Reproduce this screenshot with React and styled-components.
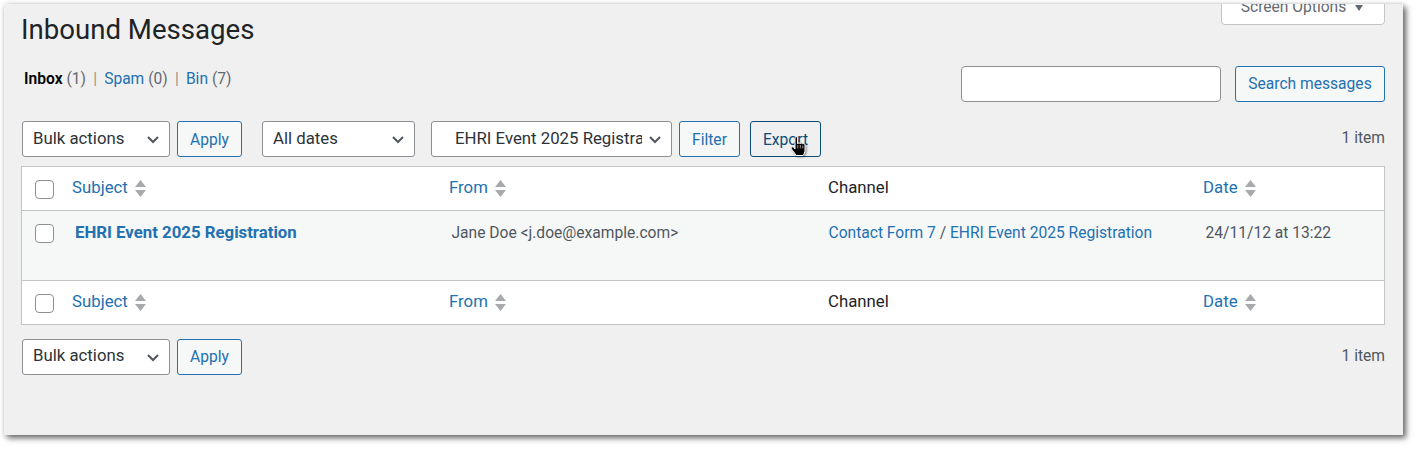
import React from "react";
import styled, { createGlobalStyle } from "styled-components";

const Global = createGlobalStyle`
  html, body { margin: 0; padding: 0; background: #fff; }
  body { font-family: Roboto, "Liberation Sans", sans-serif; color: #3c434a; }
  * { box-sizing: border-box; }
`;

const Page = styled.div`
  width: 1418px;
  height: 450px;
  padding: 4px 15px 15px 4px;
  background: #fff;
`;
const Panel = styled.main`
  height: 431px;
  background: #f0f0f1;
  padding: 0 18px 0 17px;
  overflow: hidden;
  box-shadow: 3px 3px 6px rgba(0, 0, 0, 0.6), 0 0 5px rgba(0, 0, 0, 0.1);
  font-size: 15.6px;
`;
const Head = styled.header`
  display: flex;
  justify-content: space-between;
  align-items: flex-start;
  height: 62px;
`;
const Title = styled.h1`
  margin: 9px 0 0;
  font-size: 27.6px;
  line-height: 34px;
  font-weight: 400;
  color: #1d2327;
`;
const ScreenOptions = styled.button`
  width: 164px;
  height: 34px;
  margin-top: -13px;
  border: 1px solid #c3c4c7;
  border-radius: 0 0 4px 4px;
  background: #fff;
  color: #646970;
  font: 400 15.6px/30px Roboto, sans-serif;
  padding: 0 2px 2px 0;
  display: flex;
  align-items: center;
  justify-content: center;
  gap: 9px;
`;
const Caret = styled.span`
  width: 0;
  height: 0;
  margin-top: 2px;
  border-left: 4px solid transparent;
  border-right: 4px solid transparent;
  border-top: 6px solid #646970;
`;
const SearchRow = styled.div`
  display: flex;
  justify-content: space-between;
  align-items: flex-start;
  height: 55px;
`;
const Tabs = styled.ul`
  display: flex;
  list-style: none;
  margin: 4px 0 0 3px;
  padding: 0;
  line-height: 18px;
  color: #646970;
`;
const Tab = styled.li`
  white-space: pre;
  &:not(:last-child)::after {
    content: "|";
    margin: 0 7.2px;
    color: #98908a;
  }
`;
const TabLink = styled.a`
  color: ${(p) => (p.$current ? "#000" : "#2271b1")};
  font-weight: ${(p) => (p.$current ? 600 : 400)};
`;
const SearchBox = styled.div`
  display: flex;
  gap: 14px;
`;
const SearchInput = styled.div`
  width: 260px;
  height: 36px;
  background: #fff;
  border: 1px solid #8c8f94;
  border-radius: 4px;
`;
const Button = styled.button`
  height: 36px;
  width: ${(p) => p.$w}px;
  padding: ${(p) => p.$pt ?? 2}px 0 0;
  background: ${(p) => (p.$hover ? "#f0f0f1" : "#f6f7f7")};
  border: 1px solid ${(p) => (p.$hover ? "#0a4b78" : "#2271b1")};
  border-radius: 3px;
  color: ${(p) => (p.$hover ? "#0a4b78" : "#2271b1")};
  font: 400 15.6px/1 Roboto, sans-serif;
  position: relative;
`;
const Toolbar = styled.div`
  display: flex;
  align-items: center;
  height: 36px;
  padding-left: 1px;
`;
const Group = styled.div`
  display: flex;
  gap: ${(p) => p.$gap ?? 7}px;
  margin-right: ${(p) => p.$mr || 0}px;
`;
const Select = styled.div`
  width: ${(p) => p.$w}px;
  height: 36px;
  background: #fff;
  border: 1px solid #8c8f94;
  border-radius: 3px;
  color: #2c3338;
  font-size: 16.8px;
  line-height: ${(p) => p.$lh}px;
  padding-left: ${(p) => p.$pl || 10}px;
  position: relative;
  display: flex;
  align-items: flex-start;
  white-space: nowrap;
`;
const SelectText = styled.span`
  display: block;
  overflow: hidden;
  width: ${(p) => (p.$w ? p.$w + "px" : "auto")};
`;
const Chevron = styled.svg`
  position: absolute;
  right: 6px;
  top: 7px;
  width: 20px;
  height: 20px;
  fill: none;
  stroke: #50575e;
  stroke-width: 2;
`;
const Count = styled.span`
  margin-left: auto;
  margin-top: -2px;
  color: #50575e;
`;
const Table = styled.div`
  margin-top: 9px;
  background: #fff;
  border: 1px solid #c3c4c7;
`;
const Row = styled.div`
  display: grid;
  grid-template-columns: 50px 377px 379px 375px 1fr;
  height: ${(p) => p.$h}px;
  background: ${(p) => (p.$body ? "#f6f7f7" : "#fff")};
  border-top: ${(p) => (p.$line ? "1px solid #c3c4c7" : "0")};
  border-bottom: ${(p) => (p.$under ? "1px solid #c3c4c7" : "0")};
  align-items: ${(p) => (p.$body ? "start" : "center")};
  padding-top: ${(p) => (p.$body ? 12 : 0)}px;
`;
const Check = styled.span`
  display: block;
  width: 19px;
  height: 19px;
  margin-left: 13px;
  margin-top: ${(p) => (p.$body ? 1 : 2)}px;
  background: #fff;
  border: 1px solid #8c8f94;
  border-radius: 4px;
`;
const Sort = styled.a`
  display: flex;
  align-items: center;
  gap: 7px;
  color: #2271b1;
  font-size: 16.8px;
  line-height: 20px;
  margin-top: -3px;
`;
const SortIcon = styled.svg`
  width: 11px;
  height: 17px;
  margin-top: 2px;
  fill: #a7aaad;
`;
const Plain = styled.span`
  color: ${(p) => p.$c || "#50575e"};
  font-size: ${(p) => p.$s || 15.6}px;
  margin-left: ${(p) => p.$ml || 0}px;
  margin-top: ${(p) => p.$mt || 0}px;
  line-height: 20px;
`;
const SubjectLink = styled.a`
  color: #2271b1;
  font-weight: 700;
  font-size: 16.8px;
  margin-left: 3px;
  margin-top: -1px;
  line-height: 20px;
`;
const Link = styled.a`
  color: #2271b1;
`;
const Pointer = styled.svg`
  position: absolute;
  left: 39px;
  top: 14px;
  width: 19px;
  height: 21px;
  filter: drop-shadow(1px 1px 1px rgba(0, 0, 0, 0.45));
`;
const Bottom = styled.div`
  margin-top: 14px;
`;

const ChevronIcon = () => (
  <Chevron viewBox="0 0 20 20"><path d="M5 8l5 5 5-5" /></Chevron>
);
const Arrows = () => (
  <SortIcon viewBox="0 0 11 17"><path d="M5.500 0l5.500 7H0zM0 10h11l-5.500 7z" /></SortIcon>
);
const SelectBox = ({ w, pl, tw, lh = 33, children }) => (
  <Select $w={w} $pl={pl} $lh={lh}>
    <SelectText $w={tw}>{children}</SelectText>
    <ChevronIcon />
  </Select>
);
const Columns = ({ line, under }) => (
  <Row $h={44} $line={line} $under={under}>
    <Check />
    <Sort>Subject <Arrows /></Sort>
    <Sort>From <Arrows /></Sort>
    <Plain $c="#1d2327" $s={16.8} $mt={-4}>Channel</Plain>
    <Sort>Date <Arrows /></Sort>
  </Row>
);

export default function App() {
  return (
    <Page>
      <Global />
      <Panel>
        <Head>
          <Title>Inbound Messages</Title>
          <ScreenOptions>Screen Options <Caret /></ScreenOptions>
        </Head>
        <SearchRow>
          <Tabs>
            <Tab><TabLink $current>Inbox</TabLink> (1)</Tab>
            <Tab><TabLink>Spam</TabLink> (0)</Tab>
            <Tab><TabLink>Bin</TabLink> (7)</Tab>
          </Tabs>
          <SearchBox>
            <SearchInput />
            <Button $w={150} $pt={2}>Search messages</Button>
          </SearchBox>
        </SearchRow>
        <Toolbar>
          <Group $mr={20}>
            <SelectBox w={148}>Bulk actions</SelectBox>
            <Button $w={65} $pt={4}>Apply</Button>
          </Group>
          <Group $gap={16} $mr={7}>
            <SelectBox w={153}>All dates</SelectBox>
            <SelectBox w={241} pl={23} tw={187}>EHRI Event 2025 Registration</SelectBox>
          </Group>
          <Group $mr={10}>
            <Button $w={61} $pt={4}>Filter</Button>
          </Group>
          <Group>
            <Button $w={71} $pt={4} $hover>
              Export
              <Pointer viewBox="0 0 19 21">
                <path
                  d="M5 1.800c0-1.500 2.600-1.500 2.600 0v6c.2-1.200 2.400-1.200 2.600 0 .3-1 2.300-1 2.500.2.4-.8 2.300-.6 2.300.8v5.400c0 2.200-1.200 4.200-2 5.300H6.200C5 17.500 2.500 14.500 1.400 12.800c-.9-1.500.9-2.700 2-1.500L5 13z"
                  fill="#000" stroke="#fff" strokeWidth="1"
                />
                <path d="M7.800 9v3.500M10.300 9v3.500M12.800 9.500v3" stroke="#fff" strokeWidth=".6" fill="none" />
              </Pointer>
            </Button>
          </Group>
          <Count>1 item</Count>
        </Toolbar>
        <Table>
          <Columns under />
          <Row $h={69} $body>
            <Check $body />
            <SubjectLink>EHRI Event 2025 Registration</SubjectLink>
            <Plain $ml={2.5}>Jane Doe &lt;j.doe@example.com&gt;</Plain>
            <Plain $ml={0.5}><Link>Contact Form 7</Link> / <Link>EHRI Event 2025 Registration</Link></Plain>
            <Plain $ml={2.5}>24/11/12 at 13:22</Plain>
          </Row>
          <Columns line />
        </Table>
        <Bottom>
          <Toolbar>
            <Group>
              <SelectBox w={148} lh={31}>Bulk actions</SelectBox>
              <Button $w={65}>Apply</Button>
            </Group>
            <Count>1 item</Count>
          </Toolbar>
        </Bottom>
      </Panel>
    </Page>
  );
}
